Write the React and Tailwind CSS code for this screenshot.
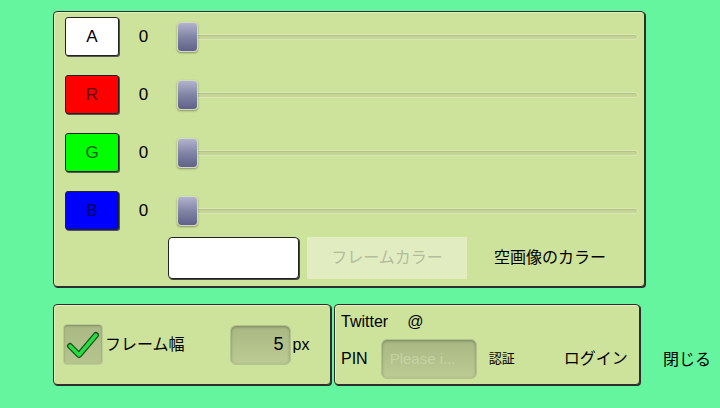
import React from 'react'

const rows = [
  { label: 'A', box: 'bg-white text-black' },
  { label: 'R', box: 'bg-[#ff0000] text-[#5a0000]' },
  { label: 'G', box: 'bg-[#00ff00] text-[#005a00]' },
  { label: 'B', box: 'bg-[#0000ff] text-[#00005a]' },
]

function Slider() {
  return (
    <div className="relative flex-1 h-[32px] flex items-center mr-[6px]">
      <div className="w-full h-[6px] rounded-full bg-[#c4d596] border border-[#dce7b8] shadow-[inset_0_1px_0_#b3c386]" />
      <div className="absolute left-0 top-[1px] w-[21px] h-[30px] rounded-[4px] border border-[#d5d9c4] bg-gradient-to-b from-[#b2b4cc] via-[#8284a6] to-[#5f6188] shadow-[0_1px_2px_rgba(0,0,0,0.35)]" />
    </div>
  )
}

export default function App() {
  return (
    <div
      className="w-[720px] h-[408px] bg-[#65f59f] relative overflow-hidden"
      style={{ fontFamily: '"Liberation Sans", "Noto Sans CJK JP", sans-serif' }}
    >
      <div className="pl-[53px] pt-[11px]">
        {/* color panel */}
        <div className="w-[592px] h-[276px] rounded-[4px] border border-[#2e2e2e] bg-[#cde29a] shadow-[inset_1px_1px_0_#e6efc4,1px_1px_0_#2e2e2e] pl-[11px] pt-[5px]">
          <div className="flex flex-col gap-[19px]">
            {rows.map(r => (
              <div key={r.label} className="flex items-center h-[39px]">
                <div className={`w-[54px] h-[39px] rounded-[3px] border border-[#222] shadow-[1px_1px_0_#555] flex items-center justify-center text-[17px] ${r.box}`}>
                  {r.label}
                </div>
                <div className="w-[49px] text-center text-[17px] text-black">0</div>
                <div className="ml-[9px] flex-1 flex">
                  <Slider />
                </div>
              </div>
            ))}
          </div>
          <div className="flex items-center mt-[7px] ml-[103px]">
            <div className="w-[131px] h-[42px] bg-white rounded-[4px] border-[1.5px] border-[#222] shadow-[1px_1px_0_#444]" />
            <div className="ml-[8px] w-[160px] h-[42px] bg-[#e2ecc1] flex items-center justify-center text-[16px] text-[#b3bd9c]">
              フレームカラー
            </div>
            <div className="ml-[27px] text-[16px] text-black">空画像のカラー</div>
          </div>
        </div>

        {/* bottom row */}
        <div className="flex items-start mt-[17px]">
          <div className="w-[278px] h-[81px] rounded-[4px] border border-[#2e2e2e] bg-[#cde29a] shadow-[inset_1px_1px_0_#e6efc4,1px_1px_0_#2e2e2e] flex items-center pl-[9px]">
            <div className="w-[40px] h-[41px] rounded-[4px] bg-gradient-to-b from-[#aab985] to-[#b6c58e] border border-[#bccb96] shadow-[inset_0_1px_2px_rgba(0,0,0,0.25)] flex items-center justify-center">
              <svg width="34" height="30" viewBox="0 0 34 30">
                <path d="M4 16 L13 25 L30 5" fill="none" stroke="#1b4a1b" strokeWidth="6" strokeLinecap="round" strokeLinejoin="round" />
                <path d="M4 16 L13 25 L30 5" fill="none" stroke="#22e040" strokeWidth="3.5" strokeLinecap="round" strokeLinejoin="round" />
              </svg>
            </div>
            <div className="ml-[2px] text-[16px] text-black">フレーム幅</div>
            <div className="ml-[45px] w-[61px] h-[40px] rounded-[6px] bg-gradient-to-b from-[#a9b883] to-[#bccb93] border border-[#b4c28e] shadow-[inset_0_1px_3px_rgba(0,0,0,0.3)] flex items-center justify-end pr-[6px] text-[18px] text-black">
              5
            </div>
            <div className="ml-[2px] text-[16px] text-black">px</div>
          </div>
          <div className="ml-[3px] w-[306px] h-[81px] rounded-[4px] border border-[#2e2e2e] bg-[#cde29a] shadow-[inset_1px_1px_0_#e6efc4,1px_1px_0_#2e2e2e] pl-[6px]">
            <div className="flex items-center h-[34px] text-[16px] text-black">
              <span>Twitter</span>
              <span className="ml-[19px]">@</span>
            </div>
            <div className="flex items-center h-[40px]">
              <span className="text-[16px] text-black">PIN</span>
              <div className="ml-[13px] w-[96px] h-[40px] rounded-[6px] bg-gradient-to-b from-[#a9b883] to-[#bccb93] border border-[#b4c28e] shadow-[inset_0_1px_3px_rgba(0,0,0,0.3)] flex items-center pl-[8px] text-[15px] text-[#c6d2a6]">
                Please i...
              </div>
              <span className="ml-[12px] text-[13px] text-black">認証</span>
              <span className="ml-[49px] text-[16px] text-black">ログイン</span>
            </div>
          </div>
          <div className="ml-[23px] mt-[44px] text-[16px] text-black">閉じる</div>
        </div>
      </div>
    </div>
  )
}
